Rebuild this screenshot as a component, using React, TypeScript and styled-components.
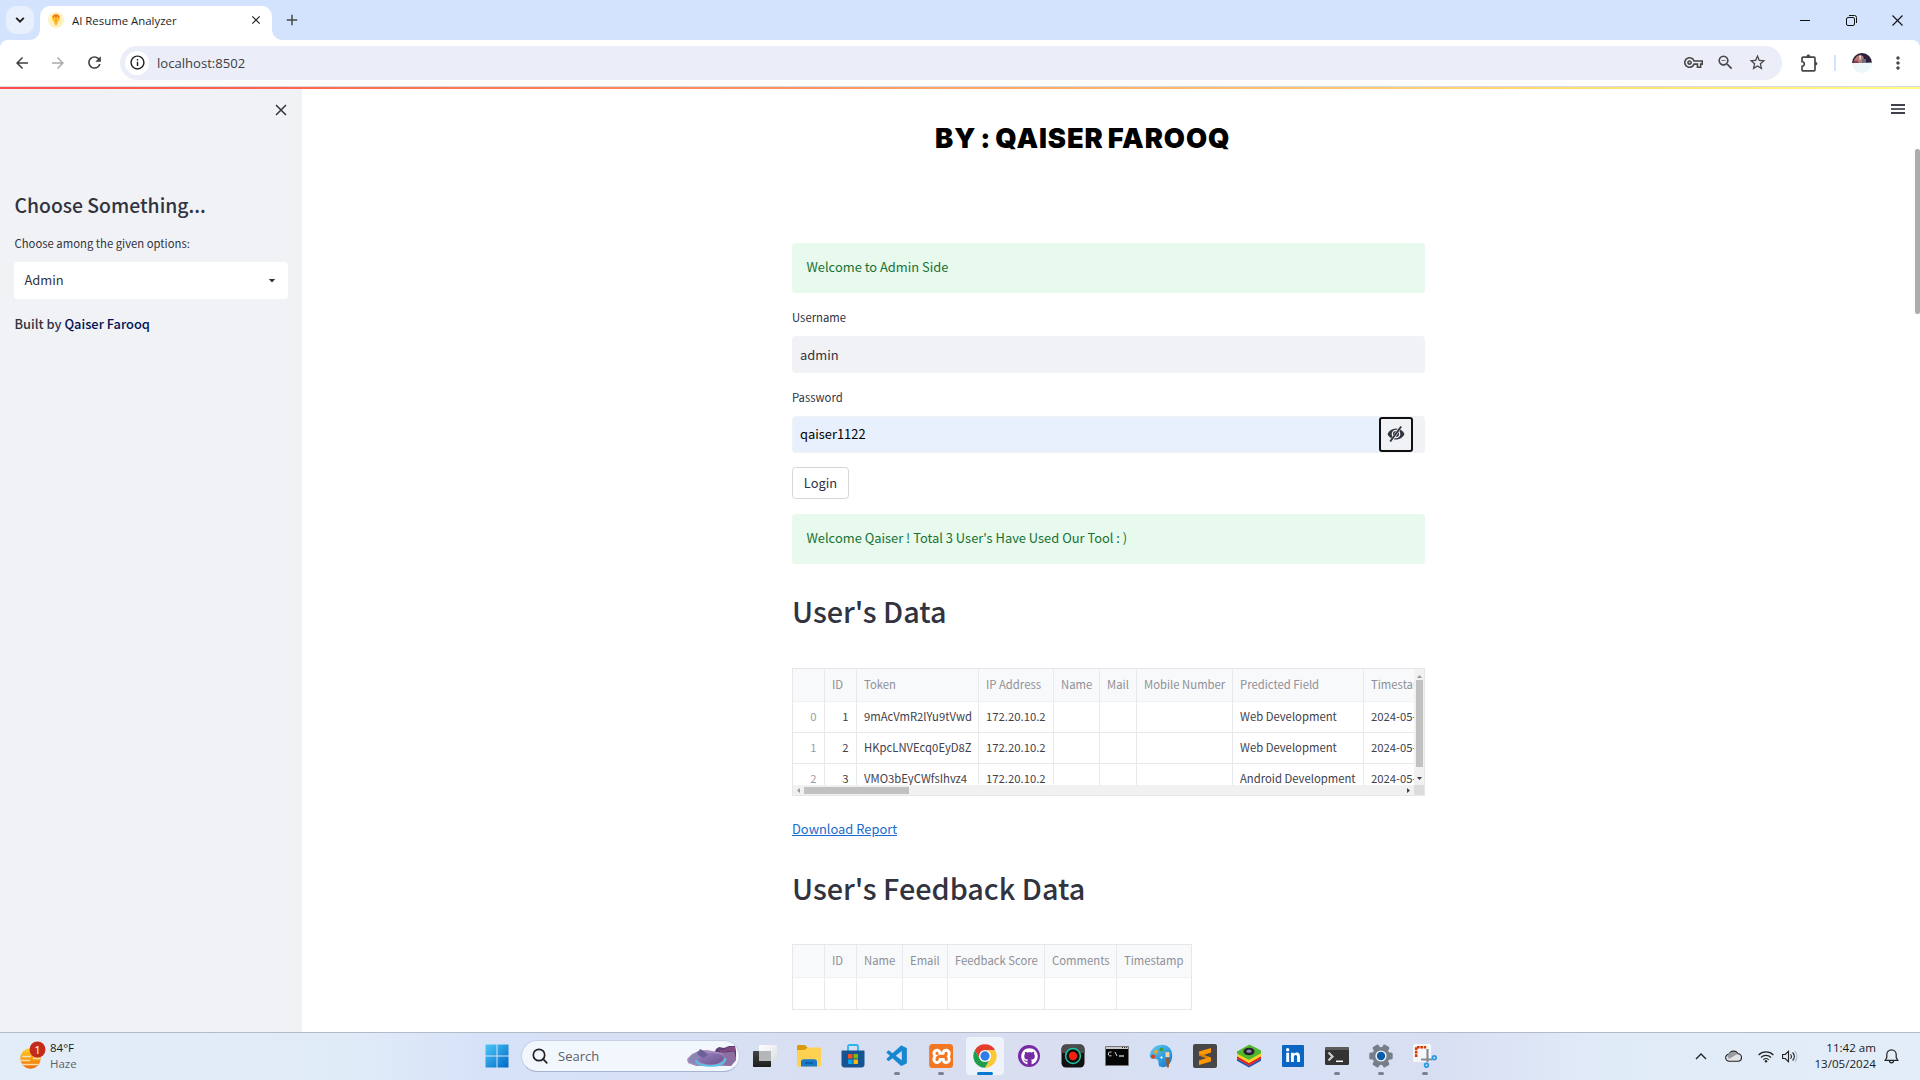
import React from "react";
import styled, { createGlobalStyle, css } from "styled-components";
import {
  MdArrowBack,
  MdArrowForward,
  MdRefresh,
  MdInfoOutline,
  MdOutlineVpnKey,
  MdZoomOut,
  MdStarBorder,
  MdMoreVert,
  MdAdd,
  MdClose,
} from "react-icons/md";
import { FaGithub, FaLinkedinIn } from "react-icons/fa";
import { VscVscode } from "react-icons/vsc";
import { SiXampp } from "react-icons/si";

const sans = `"Noto Sans CJK SC", "Noto Sans", sans-serif`;
const uiFont = `"Open Sans", "Noto Sans", sans-serif`;
const ink = "#31333f";

const GlobalStyle = createGlobalStyle`
  * { box-sizing: border-box; }
  html, body { margin: 0; padding: 0; overflow: hidden; background: #fff; }
  svg { display: block; flex: none; }
`;

const Screen = styled.div`
  width: 1920px;
  height: 1080px;
  display: flex;
  flex-direction: column;
  overflow: hidden;
  color: ${ink};
  font-family: ${sans};
`;

/* ---------- browser frame ---------- */

const TabStrip = styled.header`
  height: 40px;
  flex: none;
  display: flex;
  align-items: flex-start;
  padding: 6px 0 0 6px;
  background: #d3e3fd;
`;

const TabSearch = styled.button`
  width: 28px;
  height: 28px;
  padding: 0;
  border: 0;
  border-radius: 10px;
  background: #e9f0fd;
  display: grid;
  place-items: center;
`;

const Tab = styled.div`
  position: relative;
  width: 232px;
  height: 34px;
  margin-left: 6px;
  padding: 0 9px 6px 8px;
  display: flex;
  align-items: center;
  background: #fff;
  border-radius: 10px 10px 0 0;
  font-family: ${uiFont};
  font-size: 11.4px;
  color: #1f1f1f;

  &::before,
  &::after {
    content: "";
    position: absolute;
    bottom: 0;
    width: 10px;
    height: 10px;
  }
  &::before {
    left: -10px;
    background: radial-gradient(circle at 0 0, transparent 9.5px, #fff 10px);
  }
  &::after {
    right: -10px;
    background: radial-gradient(circle at 100% 0, transparent 9.5px, #fff 10px);
  }
`;

const TabTitle = styled.span`
  margin-left: 8px;
  flex: 1;
  line-height: 16px;
  padding-top: 1px;
`;

const NewTab = styled.div`
  margin: 5px 0 0 11px;
  color: #474747;
`;

const WindowButtons = styled.div`
  margin-left: auto;
  display: flex;
`;

const WindowButton = styled.div`
  width: 46px;
  height: 28px;
  display: grid;
  place-items: center;
`;

const ToolbarBack = styled.div`
  background: #d3e3fd;
  flex: none;
`;

const Toolbar = styled.div`
  height: 47px;
  display: flex;
  align-items: center;
  padding: 0 11px 1px 11px;
  background: #fff;
  border-bottom: 1px solid #d6dade;
  border-radius: 8px 8px 0 0;
  color: #474747;
`;

const NavIcon = styled.div<{ $dim?: boolean }>`
  width: 22px;
  margin-right: 14px;
  display: grid;
  place-items: center;
  color: ${(p) => (p.$dim ? "#ababab" : "#3f3f3f")};
`;

const Omnibox = styled.div`
  width: 1662px;
  height: 34px;
  margin-left: 1px;
  padding: 0 15px 0 5px;
  display: flex;
  align-items: center;
  border-radius: 17px;
  background: #ebeef8;
`;

const SiteInfo = styled.div`
  width: 24px;
  height: 24px;
  border-radius: 50%;
  background: #fff;
  display: grid;
  place-items: center;
  color: #1f1f1f;
`;

const Url = styled.span`
  flex: 1;
  margin-left: 8px;
  font: 13.1px/20px ${uiFont};
  color: #3c4043;
`;

const OmniIcons = styled.div`
  display: flex;
  align-items: center;
  gap: 13px;
`;

const ToolbarEnd = styled.div`
  flex: 1;
  display: flex;
  align-items: center;
  padding-left: 18px;
`;

const Divider = styled.i`
  width: 2px;
  height: 16px;
  margin: 0 16px 0 16px;
  background: #d3e3fd;
`;

const MoreMenu = styled.div`
  margin: 0 1px 0 auto;
`;

/* ---------- page ---------- */

const Page = styled.div`
  position: relative;
  flex: 1;
  min-height: 0;
  display: flex;
`;

const Decoration = styled.div`
  position: absolute;
  inset: 0 0 auto 0;
  height: 2px;
  background: linear-gradient(90deg, #ff4b4b, #fffd80);
`;

const Sidebar = styled.aside`
  width: 302px;
  flex: none;
  padding: 0 14px;
  background: #f0f2f6;
`;

const SidebarTop = styled.div`
  height: 98px;
  padding: 14px 0 0 0;
  display: flex;
  justify-content: flex-end;
`;

const SidebarHeading = styled.h2`
  margin: 0 0.5px;
  height: 40px;
  font-size: 19.35px;
  line-height: 40px;
  font-weight: 500;
`;

const FieldLabel = styled.label<{ $height: number; $shift: number }>`
  display: block;
  height: ${(p) => p.$height}px;
  padding-top: ${(p) => p.$shift}px;
  font-size: 11.3px;
  line-height: 18px;
`;

const SidebarLabel = styled(FieldLabel)`
  padding-left: 0.5px;
`;

const Select = styled.div`
  width: 274px;
  height: 37px;
  padding: 0 12px 2px 10.5px;
  display: flex;
  align-items: center;
  justify-content: space-between;
  border-radius: 3.6px;
  background: #fff;
  font-size: 12.9px;

  svg {
    margin-top: 3px;
  }
`;

const Credit = styled.p`
  margin: 13px 0.5px 0;
  font-size: 12.85px;
  line-height: 23px;
  font-weight: 500;
`;

const CreditName = styled.span`
  color: #021154;
`;

const Main = styled.main`
  position: relative;
  flex: 1;
  min-width: 0;
  display: flex;
  justify-content: center;
  padding-right: 5px;
`;

const MenuButton = styled.div`
  position: absolute;
  top: 17px;
  right: 15px;
  width: 14px;
  height: 10px;
  border-top: 2px solid #3e404b;
  border-bottom: 2px solid #3e404b;
  padding-top: 2px;

  &::after {
    content: "";
    display: block;
    height: 2px;
    background: #5a5c66;
  }
`;

const PageScroll = styled.div`
  position: absolute;
  right: 0;
  top: 62px;
  width: 5px;
  height: 165px;
  border-radius: 2px;
  background: #adadb0;
`;

const Block = styled.div`
  width: 633px;
  display: flex;
  flex-direction: column;
  align-items: stretch;
`;

const Byline = styled.div`
  height: 156px;
  padding: 30px 0 0 143px;
  font: 900 27.3px/43px Inter, "Open Sans", sans-serif;
  letter-spacing: 0.9px;
  word-spacing: -2.3px;
  white-space: nowrap;
  color: #000;
`;

const Alert = styled.div`
  height: 50px;
  padding: 0 14.5px 3px;
  display: flex;
  align-items: center;
  border-radius: 3.6px;
  background: #e8f9ee;
  color: #177233;
  font-size: 12.9px;
  white-space: nowrap;
`;

const Input = styled.div`
  height: 37px;
  display: flex;
  border: 1px solid #f0f2f6;
  border-radius: 3.6px;
  background: #f0f2f6;
  font-size: 12.9px;
  overflow: hidden;
`;

const InputValue = styled.span<{ $autofill?: boolean }>`
  flex: 1;
  padding-left: 7px;
  line-height: 36px;
  ${(p) =>
    p.$autofill &&
    css`
      line-height: 34px;
      background: #e8f0fe;
      color: #000;
    `}
`;

const RevealButton = styled.button`
  width: 34px;
  height: 35px;
  margin-right: 11px;
  padding: 0 0 1px;
  border: 2px solid #101010;
  border-radius: 3px;
  background: #f0f2f6;
  display: grid;
  place-items: center;
`;

const LoginButton = styled.button`
  align-self: flex-start;
  width: 57px;
  height: 32px;
  margin: 14px 0 15px;
  padding: 0 0 1px;
  border: 1px solid #d6d6d9;
  border-radius: 3.6px;
  background: #fff;
  color: ${ink};
  font: 12.9px/28px ${sans};
`;

const Heading = styled.h1<{ $height: number; $top: number }>`
  margin: 0;
  height: ${(p) => p.$height}px;
  padding-top: ${(p) => p.$top}px;
  font-size: 28.8px;
  line-height: 42px;
  font-weight: 500;
`;

const Frame = styled.div<{ $w: number; $h: number }>`
  width: ${(p) => p.$w}px;
  height: ${(p) => p.$h}px;
  border: 1px solid #e6e7ea;
  overflow: hidden;
`;

const ScrollFrame = styled(Frame)`
  display: grid;
  grid-template: 1fr 10px / 1fr 10px;
`;

const Viewport = styled.div`
  overflow: hidden;
  min-width: 0;
  min-height: 0;
`;

const Grid = styled.div<{ $cols: string; $row: number }>`
  display: grid;
  grid-template-columns: ${(p) => p.$cols};
  grid-template-rows: 33px;
  grid-auto-rows: ${(p) => p.$row}px;
  width: max-content;
  font-size: 11.3px;
`;

const Cell = styled.div<{ $head?: boolean; $index?: boolean; $right?: boolean }>`
  display: flex;
  align-items: center;
  justify-content: ${(p) => (p.$right ? "flex-end" : "flex-start")};
  padding: 0 7.5px 3px 7px;
  border-right: 1px solid #e8e9ec;
  border-bottom: 1px solid ${(p) => (p.$head ? "#f1f2f5" : "#e8e9ec")};
  background: ${(p) => (p.$head ? "#f8f9fb" : "#fff")};
  color: ${(p) => (p.$head ? "#8e9098" : p.$index ? "#9a9ca3" : "#3f414b")};
  white-space: nowrap;
`;

const VBar = styled.div`
  display: flex;
  flex-direction: column;
  align-items: center;
  justify-content: space-between;
  padding: 5px 0 4px;
  background: #f1f1f1;
`;

const HBar = styled.div`
  display: flex;
  align-items: center;
  justify-content: space-between;
  padding: 0 3px 0 3px;
  background: #f1f1f1;
`;

const VThumb = styled.i`
  width: 7px;
  height: 87px;
  margin: 1px 0 auto;
  background: #c1c1c1;
`;

const HThumb = styled.i`
  width: 105px;
  height: 7px;
  margin: 0 auto 0 3px;
  background: #c1c1c1;
`;

const Corner = styled.i`
  background: #dcdcdc;
`;

const LinkRow = styled.p`
  margin: 0;
  height: 59px;
  padding-top: 21px;
  font-size: 12.9px;
  line-height: 23px;
`;

const Link = styled.a`
  color: #1a6bd0;
  text-decoration: underline;
  text-underline-offset: 1px;
`;

/* ---------- taskbar ---------- */

const Taskbar = styled.footer`
  height: 48px;
  flex: none;
  display: flex;
  align-items: center;
  padding-bottom: 1px;
  border-top: 1px solid #b3bbc9;
  background: linear-gradient(90deg, #e2edf8 0, #e0ebf8 360px, #d6e2f8 480px, #d8dff2 800px, #d9def0 1050px, #d6e1f6 1230px, #d9dff2 1440px, #e0ebf8 1600px, #e2edf8 100%);
  font-family: ${uiFont};
  color: #1b1b1b;
`;

const Weather = styled.div`
  width: 474.5px;
  display: flex;
  align-items: center;
  padding-left: 17px;
`;

const WeatherText = styled.div`
  margin-left: 4px;
  font-size: 11.5px;
  line-height: 16px;
`;

const Muted = styled.div`
  color: #5c636b;
`;

const Slot = styled.div<{ $active?: boolean }>`
  position: relative;
  width: ${(p) => (p.$active ? 38 : 44)}px;
  height: 38px;
  margin: 0 ${(p) => (p.$active ? 3 : 0)}px;
  border-radius: 4px;
  display: grid;
  place-items: center;
  background: ${(p) => (p.$active ? "#eef2fb" : "transparent")};
`;

const RunMark = styled.i<{ $active?: boolean }>`
  position: absolute;
  bottom: 0;
  left: 50%;
  transform: translateX(-50%);
  width: ${(p) => (p.$active ? 16 : 6)}px;
  height: 3px;
  border-radius: 2px;
  background: ${(p) => (p.$active ? "#0078d4" : "#7d828e")};
`;

const SearchPill = styled.div`
  width: 219px;
  height: 32px;
  margin: 0 3px 0 2.5px;
  padding: 0 2px 0 10px;
  display: flex;
  align-items: center;
  border: 1px solid #c6cfe6;
  border-bottom-color: #a9b4d4;
  border-radius: 16px;
  background: #f2f6fd;
  font-size: 13px;
  color: #5b5f66;
`;

const SearchText = styled.span`
  flex: 1;
  margin-left: 10px;
`;

const XamppTile = styled.div`
  width: 24px;
  height: 24px;
  border-radius: 3px;
  background: #fff;
  color: #f37623;
  display: grid;
  place-items: center;
  overflow: hidden;
`;

const GithubTile = styled.div`
  width: 22px;
  height: 22px;
  border-radius: 50%;
  background: #762ba3;
  color: #fff;
  display: grid;
  place-items: center;
`;

const LinkedinTile = styled.div`
  width: 22px;
  height: 22px;
  border-radius: 1px;
  background: #0a66c2;
  color: #fff;
  display: grid;
  place-items: center;
`;

const Tray = styled.div`
  margin-left: auto;
  padding-right: 21px;
  display: flex;
  align-items: center;
`;

const TrayIcon = styled.div<{ $gap: number }>`
  margin-right: ${(p) => p.$gap}px;
`;

const Clock = styled.div`
  width: 66px;
  text-align: right;
  font-size: 11.6px;
  line-height: 16px;
  margin-right: 8px;
`;

/* ---------- data ---------- */

const userHead = ["", "ID", "Token", "IP Address", "Name", "Mail", "Mobile Number", "Predicted Field", "Timestamp"];
const userRows = [
  ["0", "1", "9mAcVmR2lYu9tVwd", "172.20.10.2", "", "", "", "Web Development", "2024-05-13"],
  ["1", "2", "HKpcLNVEcq0EyD8Z", "172.20.10.2", "", "", "", "Web Development", "2024-05-13"],
  ["2", "3", "VMO3bEyCWfsIhvz4", "172.20.10.2", "", "", "", "Android Development", "2024-05-13"],
];
const feedbackHead = ["", "ID", "Name", "Email", "Feedback Score", "Comments", "Timestamp"];

/* ---------- drawings ---------- */

const Favicon = () => (
  <svg width="16" height="16" viewBox="0 0 16 16">
    <circle cx="8" cy="8" r="8" fill="#fff1c0" />
    <path d="M8 2.200a4 4 0 0 0-4 4c0 1.700 1.200 2.500 1.700 3.800h4.600c.5-1.300 1.700-2.100 1.700-3.800a4 4 0 0 0-4-4z" fill="#ffc62b" />
    <path d="M4.400 5.600C4.600 3.600 6 2.200 8 2.200s3.400 1.400 3.600 3.400L10.300 6 9.600 4.300 8 6 6.400 4.300 5.700 6z" fill="#f4711f" />
    <path d="M6.300 10.200h3.400v1.600L8 13.400l-1.700-1.600z" fill="#ffb02e" />
    <path d="M7.500 6h1v4h-1z" fill="#f48a1f" />
  </svg>
);

const ExtensionIcon = () => (
  <svg width="18" height="18" viewBox="0 0 18 18" fill="none">
    <path d="M2 4.200c0-.6.4-1 1-1h11c.6 0 1 .4 1 1v11.600c0 .6-.4 1-1 1H3c-.6 0-1-.4-1-1V12.300c1.300 0 2.300-.9 2.300-2.300S3.300 7.700 2 7.700z" stroke="#474747" strokeWidth="1.700" strokeLinejoin="round" />
    <path d="M6.800 3V2.200C6.800 1.200 7.600.8 8.400.8s1.600.4 1.600 1.400V3zM15 8.200h.8c.9 0 1.300.7 1.300 1.500s-.5 1.400-1.300 1.400H15z" fill="#474747" stroke="#474747" strokeWidth=".5" />
  </svg>
);

const Avatar = () => (
  <svg width="20" height="20" viewBox="0 0 20 20">
    <defs>
      <clipPath id="avatar"><circle cx="10" cy="10" r="10" /></clipPath>
    </defs>
    <g clipPath="url(#avatar)">
      <path d="M0 0h20v20H0z" fill="#edf7f9" />
      <path d="M0 0h20v10H0z" fill="#2c2138" />
      <path d="M2 7l3-4 3-1 3 1 1 3-1 4H2z" fill="#b87a78" />
      <path d="M7 3l2-1v3l-1 3z" fill="#f2d7cf" />
      <path d="M10 6h4v4h-4z" fill="#6d6b86" />
      <path d="M2 8l3-.5L7 10H1z" fill="#8c3c44" />
      <path d="M0 10.500L20 9.500V12H0z" fill="#edf7f9" />
    </g>
  </svg>
);

const HiddenEye = () => (
  <svg width="18" height="18" viewBox="0 0 18 18">
    <path d="M.5 9C2 5.600 5.200 3.500 9 3.500S16 5.600 17.500 9C16 12.400 12.800 14.500 9 14.500S2 12.400.5 9z" fill={ink} />
    <circle cx="9" cy="9" r="3.700" fill="none" stroke="#f0f2f6" strokeWidth="1.300" />
    <path d="M3.500 17L13.800 1.500" stroke="#f0f2f6" strokeWidth="3" />
    <path d="M3.200 16.500L14.200 1.500" stroke={ink} strokeWidth="1.900" />
  </svg>
);

const Arrow = ({ dir, dark }: { dir: "up" | "down" | "left" | "right"; dark?: boolean }) => {
  const d = { up: "M0 4L2.500 1 5 4z", down: "M0 1l2.500 3L5 1z", left: "M4 0L1 2.500 4 5z", right: "M1 0l3 2.500L1 5z" }[dir];
  return (
    <svg width="5" height="5" viewBox="0 0 5 5"><path d={d} fill={dark ? "#404040" : "#9b9b9b"} /></svg>
  );
};

const HazeIcon = () => (
  <svg width="29" height="32" viewBox="0 0 29 32">
    <defs>
      <linearGradient id="sun" x1="0" y1="0" x2="0" y2="1"><stop offset="0" stopColor="#ffd21f" /><stop offset="1" stopColor="#ef6a0a" /></linearGradient>
    </defs>
    <circle cx="13.500" cy="18.500" r="10.200" fill="url(#sun)" />
    <path d="M2 20.500h11M4 24.500h17M5 16.500h9M16 18.500h7" stroke="#f6dfae" strokeWidth="1.500" />
    <circle cx="20.500" cy="9.500" r="8" fill="#c42b1c" />
    <text x="20.500" y="13.700" textAnchor="middle" fontFamily="Open Sans" fontSize="11.500" fill="#fff">1</text>
  </svg>
);

const StartIcon = () => (
  <svg width="24" height="24" viewBox="0 0 24 24">
    <defs><linearGradient id="win" x1="0" y1="0" x2="1" y2="1"><stop offset="0" stopColor="#4cc8f8" /><stop offset="1" stopColor="#0067c6" /></linearGradient></defs>
    <path d="M.5.5h11v11H.5zM12.500.5h11v11h-11zM.5 12.500h11v11H.5zM12.500 12.500h11v11h-11z" fill="url(#win)" />
  </svg>
);

const SearchIcon = () => (
  <svg width="16" height="16" viewBox="0 0 16 16" fill="none" stroke="#222" strokeWidth="1.700" strokeLinecap="round">
    <circle cx="7" cy="7" r="5.700" /><path d="M11.200 11.200L14.800 14.800" />
  </svg>
);

const SearchArt = () => (
  <svg width="51" height="22" viewBox="0 0 51 22">
    <defs><linearGradient id="rock" x1="0" y1="0" x2="1" y2="1"><stop offset="0" stopColor="#9a86c0" /><stop offset="1" stopColor="#67508f" /></linearGradient></defs>
    <path d="M30 4l3-2 5 1 5-2 6 0 1 5v9l-6 4H24z" fill="#5b3f78" />
    <path d="M32 4l6 1 4-3 7 0v5l-8-1-5 3z" fill="#7e4a80" />
    <path d="M1 14l5-5 7-3 8-1 16 3 11-1 2 8-5 6H10L2 18z" fill="#a58bb8" />
    <path d="M4 12l8-6 4 3-4 5 2 6-11-3z" fill="#8b86b6" />
    <path d="M36 8l12-1 2 8-5 6-8-1 3-6z" fill="#8d6f9f" />
    <path d="M10 15c0 4 7 6 15 6S40 18 39.500 13" stroke="#4cc9ee" strokeWidth="1.700" fill="none" />
    <path d="M12 13c1-3 6-5 12-5s14 1 14 4.500-6 7-13 7-14-2.500-13-6.500z" fill="url(#rock)" />
    <path d="M11 9l3-5 4 2 4 4-5 3z" fill="#6b6099" />
  </svg>
);

const TaskViewIcon = () => (
  <svg width="24" height="24" viewBox="0 0 24 24">
    <defs>
      <linearGradient id="tvd" x1="0" y1="0" x2="0" y2="1"><stop offset="0" stopColor="#444" /><stop offset="1" stopColor="#1c1c1c" /></linearGradient>
      <linearGradient id="tvl" x1="0" y1="0" x2="1" y2="1"><stop offset="0" stopColor="#fff" /><stop offset="1" stopColor="#dcdee4" /></linearGradient>
    </defs>
    <rect x="0" y="7" width="18" height="16" rx=".8" fill="url(#tvd)" />
    <rect x="6" y="1" width="18" height="16" rx=".8" fill="url(#tvl)" />
    <path d="M6 7h12v10H6z" fill="#b5b6b8" />
  </svg>
);

const FolderIcon = () => (
  <svg width="24" height="24" viewBox="0 0 24 24">
    <path d="M0 2.500C0 1.700.6 1 1.500 1H8l2.500 2.500V7H0z" fill="#d99a0b" />
    <path d="M0 6h7.500l3-2.500h12c.8 0 1.500.6 1.500 1.500v16c0 .8-.6 1.500-1.500 1.500h-21C.6 22.500 0 21.800 0 21z" fill="#ffd153" />
    <path d="M4 22.500V18c0-1.600 1-2.700 2.600-2.700h10.700c1.700 0 2.700 1.100 2.700 2.700v4.500z" fill="#1979ca" />
    <path d="M8 19h8" stroke="#0d4f93" strokeWidth="1.300" />
  </svg>
);

const StoreIcon = () => (
  <svg width="24" height="24" viewBox="0 0 24 24">
    <path d="M7 7V2.500C7 1.600 7.600 1 8.500 1h7c.9 0 1.500.6 1.500 1.500V7" fill="none" stroke="#2cb5ea" strokeWidth="1.800" />
    <path d="M.5 6.500h23v14c0 1.700-1.300 3-3 3h-17c-1.700 0-3-1.300-3-3z" fill="#155392" />
    <path d="M7 10h4.500v4.500H7z" fill="#f25022" /><path d="M12.500 10H17v4.500h-4.500z" fill="#7fba00" />
    <path d="M7 15.500h4.500V20H7z" fill="#00a4ef" /><path d="M12.500 15.500H17V20h-4.500z" fill="#ffb900" />
  </svg>
);

const ChromeIcon = () => (
  <svg width="24" height="24" viewBox="0 0 48 48">
    <circle cx="24" cy="24" r="23.500" fill="#fff" />
    <path d="M3.600 12.300A23.500 23.500 0 0 1 44.400 12.300H24A11.700 11.700 0 0 0 13.900 29.900z" fill="#e33b2e" />
    <path d="M44.400 12.300A23.500 23.500 0 0 1 24 47.500L34.100 29.900A11.700 11.700 0 0 0 34.100 18.100L24 12.300z" fill="#fcc934" />
    <path d="M24 47.500A23.500 23.500 0 0 1 3.600 12.300L13.900 29.900A11.700 11.700 0 0 0 34.100 29.900z" fill="#1e9e4a" />
    <circle cx="24" cy="24" r="11.700" fill="#fff" /><circle cx="24" cy="24" r="9.300" fill="#2f7de9" />
  </svg>
);

const RecorderIcon = () => (
  <svg width="24" height="24" viewBox="0 0 24 24">
    <rect x=".5" y=".5" width="23" height="23" rx="4.500" fill="#111" />
    <path d="M.5 9V5C.5 2.500 2.500.5 5 .5h14c2.500 0 4.500 2 4.500 4.500v4z" fill="#4b4b4b" />
    <circle cx="12" cy="12" r="7.400" fill="#101010" stroke="#1fc8a4" strokeWidth="1.500" />
    <circle cx="12" cy="12" r="4.200" fill="#f5200e" />
  </svg>
);

const CmdIcon = () => (
  <svg width="24" height="20" viewBox="0 0 24 20">
    <rect x=".5" y=".5" width="23" height="19" rx=".5" fill="#050505" stroke="#777" />
    <path d="M1 1h22v2H1z" fill="#c9c9c9" /><path d="M17 1.500h1M19 1.500h1M21 1.500h1" stroke="#333" />
    <path d="M6.500 6H4.500L3.500 7v2l1 .8h2M8.500 7v.1M8.500 9.500v.1M10 6l2 4" stroke="#eee" fill="none" strokeWidth=".9" />
    <path d="M14 10h5" stroke="#eee" strokeWidth="1.200" />
  </svg>
);

const PaintIcon = () => (
  <svg width="24" height="24" viewBox="0 0 24 24">
    <defs><linearGradient id="pal" x1="0" y1="0" x2="1" y2="1"><stop offset="0" stopColor="#5fd0f5" /><stop offset="1" stopColor="#1272cc" /></linearGradient></defs>
    <path d="M13 .8C7 .8 2 5 .8 10.500c-.6 3 1.700 4.500 4 4.300 3-.3 4.700.7 4.700 3.700 0 3 .5 4.700 4 4.700 5.500 0 9.700-5 9.700-11.200C23.200 5 19 .8 13 .8z" fill="url(#pal)" />
    <circle cx="4" cy="12.600" r="2.200" fill="#d6451f" /><circle cx="7.200" cy="7.800" r="2.100" fill="#f0a322" /><circle cx="12.500" cy="5.500" r="2" fill="#3a9d3a" />
    <path d="M11 13.500h3M12.500 12v3" stroke="#d5effb" strokeWidth=".9" />
    <path d="M17 14h3.600l-.8 9.500h-2z" fill="#9a5a23" /><path d="M16.500 13V8.500l1-.8 1 .8.800-.8 1.200.8V13z" fill="#f3d5a4" />
  </svg>
);

const SublimeIcon = () => (
  <svg width="24" height="24" viewBox="0 0 24 24">
    <rect width="24" height="24" rx="2" fill="#474747" />
    <path d="M18 4v4.600L10.500 11 18 13.400v4L6 21v-4.600l7.500-2.400L6 11.600v-4z" fill="#ff9800" />
    <path d="M18 13.400L6 9.600v2l7.500 2.400z" fill="#e27f00" />
  </svg>
);

const BlueStacksIcon = () => (
  <svg width="24" height="24" viewBox="0 0 24 24">
    <path d="M0 14.500l12 7L24 14.500v2.300L12 23.500 0 16.800z" fill="#1d57b8" />
    <path d="M0 12l12 6.800L24 12v2.700l-12 7-12-7z" fill="#e42525" />
    <path d="M0 9l12 6.800L24 9v3.200L12 19 0 12.200z" fill="#fbd21f" />
    <path d="M0 7.500L12.500.5 24 6.500v2.700L12 16 0 9.500z" fill="#52b72f" />
    <ellipse cx="12" cy="7.500" rx="5.500" ry="3.800" fill="#231f2b" /><ellipse cx="12" cy="7.200" rx="2.500" ry="1.600" fill="#9084b5" />
  </svg>
);

const TerminalIcon = () => (
  <svg width="24" height="18" viewBox="0 0 24 18">
    <rect width="24" height="18" rx="1.500" fill="#333" /><path d="M1.500 0h21A1.500 1.500 0 0 1 24 1.500V3H0V1.500A1.500 1.500 0 0 1 1.500 0z" fill="#5b5b5b" />
    <path d="M3.500 5.500l4 4-4 4" stroke="#ccc" strokeWidth="2.200" fill="none" /><path d="M11 14.300h7" stroke="#fff" strokeWidth="1.500" />
  </svg>
);

const GearIcon = () => (
  <svg width="24" height="24" viewBox="0 0 24 24">
    {[30, 90, 150].map((a) => (
      <rect key={a} x="8.500" y=".3" width="7" height="23.400" rx="1.500" fill="#767f89" transform={`rotate(${a} 12 12)`} />
    ))}
    <circle cx="12" cy="12" r="9" fill="#767f89" /><circle cx="12" cy="12" r="5.600" fill="#f2f4f7" /><circle cx="12" cy="12" r="4.200" fill="#0b5cad" />
  </svg>
);

const SnipIcon = () => (
  <svg width="24" height="24" viewBox="0 0 24 24">
    <rect x="0" y="0" width="18" height="18" rx="1.500" fill="#f7f7f9" />
    <path d="M3.200 13V3.200h10" fill="none" stroke="#d83b01" strokeWidth="2.600" strokeDasharray="2.800 .7" />
    <path d="M14.500 5v13M8 15.500h11" stroke="#868c95" strokeWidth="2.200" />
    <circle cx="21.300" cy="13.800" r="1.900" fill="none" stroke="#2499e3" strokeWidth="1.700" />
    <circle cx="13.500" cy="21.300" r="1.900" fill="none" stroke="#2499e3" strokeWidth="1.700" />
  </svg>
);

type AppEntry = { name: string; icon: React.ReactNode; run?: boolean; active?: boolean };

const apps: AppEntry[] = [
  { name: "explorer", icon: <FolderIcon /> },
  { name: "store", icon: <StoreIcon /> },
  { name: "code", icon: <VscVscode size={25} color="#1787d0" />, run: true },
  { name: "xampp", icon: <XamppTile><SiXampp size={25} /></XamppTile>, run: true },
  { name: "chrome", icon: <ChromeIcon />, run: true, active: true },
  { name: "github", icon: <GithubTile><FaGithub size={17} /></GithubTile> },
  { name: "recorder", icon: <RecorderIcon /> },
  { name: "cmd", icon: <CmdIcon /> },
  { name: "paint", icon: <PaintIcon /> },
  { name: "sublime", icon: <SublimeIcon /> },
  { name: "bluestacks", icon: <BlueStacksIcon /> },
  { name: "linkedin", icon: <LinkedinTile><FaLinkedinIn size={16} /></LinkedinTile> },
  { name: "terminal", icon: <TerminalIcon />, run: true },
  { name: "settings", icon: <GearIcon />, run: true },
  { name: "snip", icon: <SnipIcon />, run: true },
];

function Browser() {
  return (
    <>
      <TabStrip>
        <TabSearch>
          <svg width="10" height="6" viewBox="0 0 10 6"><path d="M1.200 .8L5 4.600 8.800.8" fill="none" stroke="#1f1f1f" strokeWidth="1.900" /></svg>
        </TabSearch>
        <Tab>
          <Favicon />
          <TabTitle>AI Resume Analyzer</TabTitle>
          <MdClose size={14} />
        </Tab>
        <NewTab><MdAdd size={18} /></NewTab>
        <WindowButtons>
          <WindowButton><svg width="10" height="10"><path d="M0 5.500h10" stroke="#111" /></svg></WindowButton>
          <WindowButton>
            <svg width="11" height="11" viewBox="0 0 11 11" fill="none" stroke="#111">
              <rect x=".5" y="2.500" width="8" height="8" rx="1.500" /><path d="M3 .5h5.500a2 2 0 0 1 2 2V8" />
            </svg>
          </WindowButton>
          <WindowButton><svg width="11" height="11" viewBox="0 0 11 11"><path d="M.5.500l10 10M10.500.5l-10 10" stroke="#111" strokeWidth="1.100" /></svg></WindowButton>
        </WindowButtons>
      </TabStrip>
      <ToolbarBack>
        <Toolbar>
          <NavIcon><MdArrowBack size={18} /></NavIcon>
          <NavIcon $dim><MdArrowForward size={18} /></NavIcon>
          <NavIcon><MdRefresh size={19} /></NavIcon>
          <Omnibox>
            <SiteInfo><MdInfoOutline size={17} /></SiteInfo>
            <Url>localhost:8502</Url>
            <OmniIcons>
              <MdOutlineVpnKey size={19} />
              <MdZoomOut size={19} />
              <MdStarBorder size={19} />
            </OmniIcons>
          </Omnibox>
          <ToolbarEnd>
            <ExtensionIcon />
            <Divider />
            <Avatar />
            <MoreMenu><MdMoreVert size={20} /></MoreMenu>
          </ToolbarEnd>
        </Toolbar>
      </ToolbarBack>
    </>
  );
}

function UserTable() {
  return (
    <ScrollFrame $w={633} $h={128}>
      <Viewport>
        <Grid $row={31} $cols="32px 32px 122px 75px 46px 37px 96px 131px 80px">
          {userHead.map((h, i) => <Cell $head key={i}>{h}</Cell>)}
          {userRows.map((row) =>
            row.map((v, i) => <Cell key={row[0] + i} $index={i === 0} $right={i < 2}>{v}</Cell>)
          )}
        </Grid>
      </Viewport>
      <VBar><Arrow dir="up" /><VThumb /><Arrow dir="down" dark /></VBar>
      <HBar><Arrow dir="left" /><HThumb /><Arrow dir="right" dark /></HBar>
      <Corner />
    </ScrollFrame>
  );
}

function FeedbackTable() {
  return (
    <Frame $w={400} $h={66}>
      <Grid $row={33} $cols="32px 32px 46px 45px 97px 72px 76px">
        {feedbackHead.map((h, i) => <Cell $head key={i}>{h}</Cell>)}
        {feedbackHead.map((_, i) => <Cell key={"e" + i} />)}
      </Grid>
    </Frame>
  );
}

export default function App() {
  return (
    <Screen>
      <GlobalStyle />
      <Browser />
      <Page>
        <Sidebar>
          <SidebarTop>
            <svg width="14" height="18" viewBox="0 0 14 18"><path d="M2 4l10 10M12 4L2 14" stroke={ink} strokeWidth="1.500" /></svg>
          </SidebarTop>
          <SidebarHeading>Choose Something...</SidebarHeading>
          <SidebarLabel $height={37} $shift={9}>Choose among the given options:</SidebarLabel>
          <Select>
            Admin
            <svg width="8" height="4" viewBox="0 0 8 4"><path d="M.8 0h6.400L4 3.600z" fill={ink} /></svg>
          </Select>
          <Credit>Built by <CreditName>Qaiser Farooq</CreditName></Credit>
        </Sidebar>
        <Main>
          <Block>
            <Byline>BY : QAISER FAROOQ</Byline>
            <Alert>Welcome to Admin Side</Alert>
            <FieldLabel $height={43} $shift={15}>Username</FieldLabel>
            <Input><InputValue>admin</InputValue></Input>
            <FieldLabel $height={43} $shift={15}>Password</FieldLabel>
            <Input>
              <InputValue $autofill>qaiser1122</InputValue>
              <RevealButton><HiddenEye /></RevealButton>
            </Input>
            <LoginButton>Login</LoginButton>
            <Alert>Welcome Qaiser ! Total 3 User's Have Used Our Tool : )</Alert>
            <Heading $height={104} $top={26}>User's Data</Heading>
            <UserTable />
            <LinkRow><Link>Download Report</Link></LinkRow>
            <Heading $height={89} $top={12}>User's Feedback Data</Heading>
            <FeedbackTable />
          </Block>
          <MenuButton />
          <PageScroll />
        </Main>
        <Decoration />
      </Page>
      <Taskbar>
        <Weather>
          <HazeIcon />
          <WeatherText><div>84°F</div><Muted>Haze</Muted></WeatherText>
        </Weather>
        <Slot><StartIcon /></Slot>
        <SearchPill><SearchIcon /><SearchText>Search</SearchText><SearchArt /></SearchPill>
        <Slot><TaskViewIcon /></Slot>
        {apps.map((a) => (
          <Slot key={a.name} $active={a.active}>
            {a.icon}
            {a.run && <RunMark $active={a.active} />}
          </Slot>
        ))}
        <Tray>
          <TrayIcon $gap={18}><svg width="12" height="7" viewBox="0 0 12 7"><path d="M1 6l5-5 5 5" fill="none" stroke="#222" strokeWidth="1.400" /></svg></TrayIcon>
          <TrayIcon $gap={15}>
            <svg width="18" height="12" viewBox="0 0 18 12">
              <path d="M4.500 11.300a3.600 3.600 0 0 1-.5-7.200A5 5 0 0 1 13 3.800a3.800 3.800 0 0 1 .5 7.500z" fill="#e3e4e7" stroke="#222" strokeWidth="1.100" />
              <path d="M2 5.500l2-1.400A5 5 0 0 1 12.500 4L4 9z" fill="#9b9ea3" />
            </svg>
          </TrayIcon>
          <TrayIcon $gap={8}>
            <svg width="16" height="13" viewBox="0 0 16 13" fill="none" stroke="#222" strokeWidth="1.100">
              <path d="M.6 5a10.400 10.400 0 0 1 14.800 0M3 7.500a7 7 0 0 1 10 0M5.300 9.800a3.900 3.900 0 0 1 5.400 0" /><circle cx="8" cy="11.300" r="1.200" fill="#222" stroke="none" />
            </svg>
          </TrayIcon>
          <TrayIcon $gap={12}>
            <svg width="16" height="13" viewBox="0 0 16 13" fill="none" stroke="#222" strokeWidth="1.100">
              <path d="M.6 4.500h2.600L6.500 1.300v10.400L3.200 8.500H.6zM8.500 4.300a3 3 0 0 1 0 4.400M10.600 2.500a5.500 5.500 0 0 1 0 8" /><path d="M12.800 1a8 8 0 0 1 0 11" stroke="#b7bec9" />
            </svg>
          </TrayIcon>
          <Clock>11:42 am<br />13/05/2024</Clock>
          <svg width="15" height="16" viewBox="0 0 15 16" fill="none" stroke="#222" strokeWidth="1.200">
            <path d="M2.800 6.500a4.700 4.700 0 0 1 9.400 0V9.500l1.600 2.800H1.200L2.800 9.500zM5.500 12.800a2 2 0 0 0 4 0" />
          </svg>
        </Tray>
      </Taskbar>
    </Screen>
  );
}
